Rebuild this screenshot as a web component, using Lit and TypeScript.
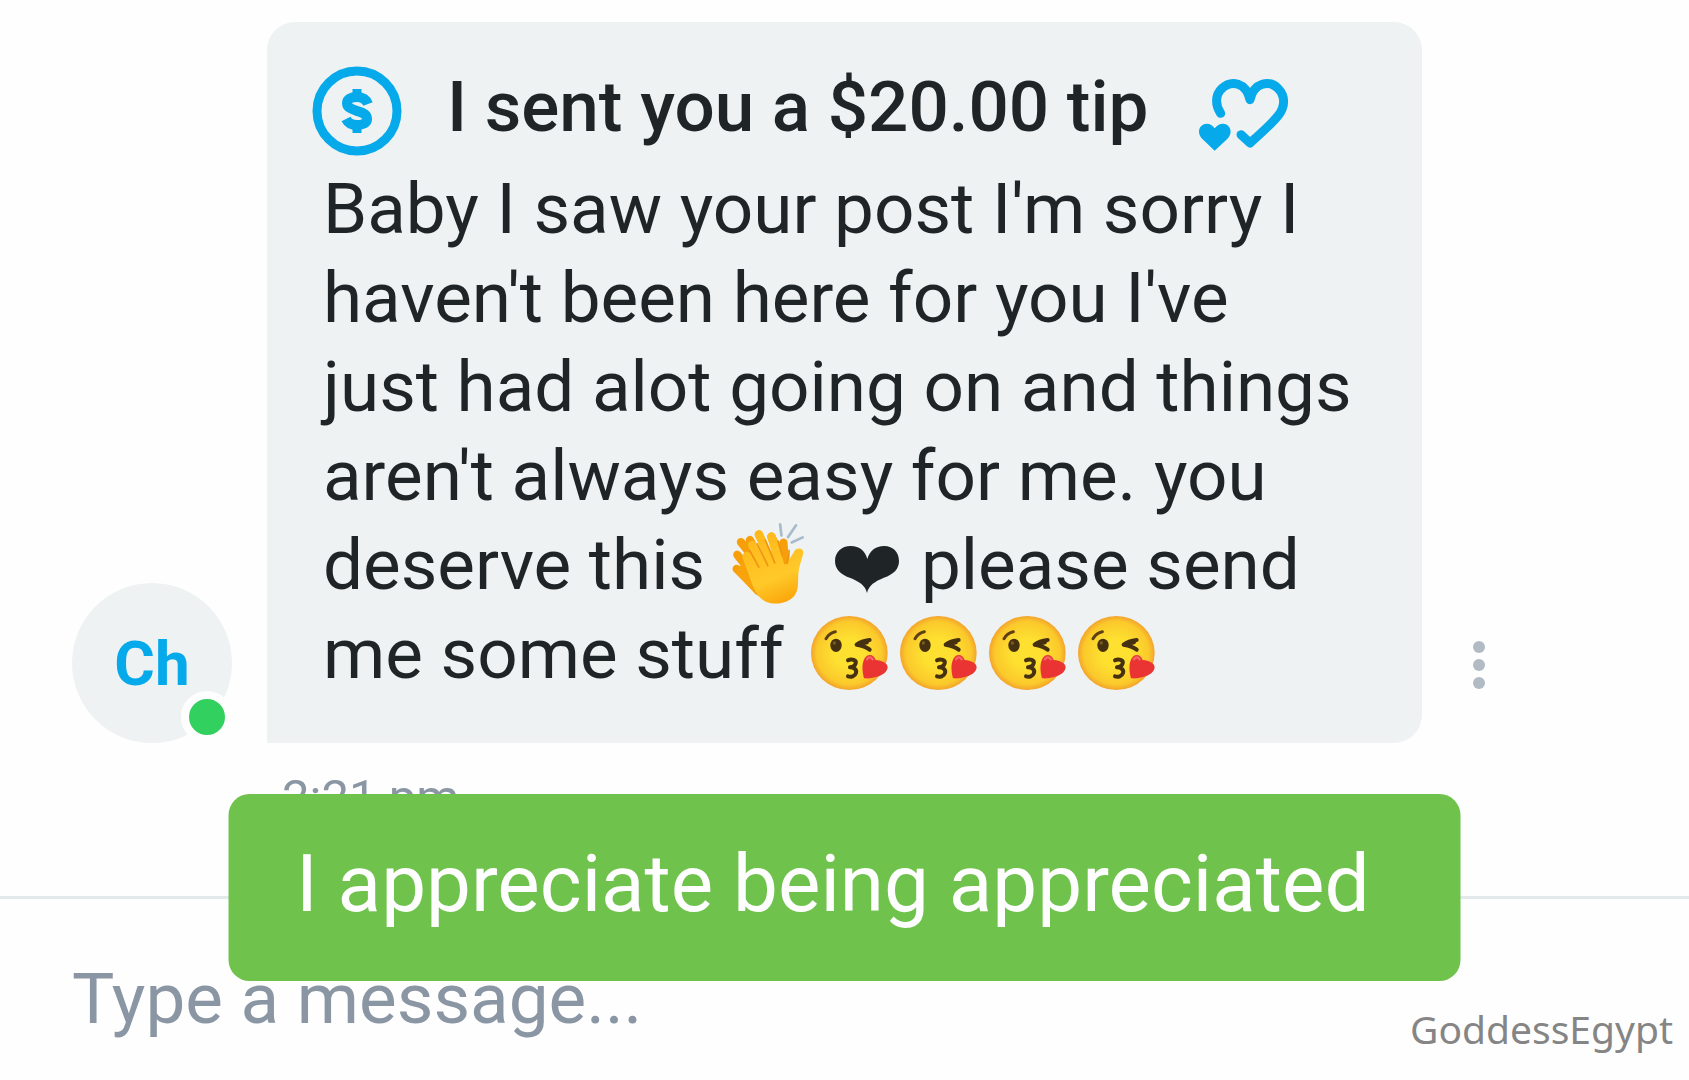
import { LitElement, html, css, svg } from "lit";
import { customElement } from "lit/decorators.js";

@customElement("emoji-kiss")
class EmojiKiss extends LitElement {
  static styles = css`
    :host { display: inline-block; width: 77px; height: 74px; margin: 0 2px 0 10px; vertical-align: -12px; line-height: 0; }
    .art { display: block; width: 100%; height: 100%; }
  `;
  render() {
    return html`<svg class="art" viewBox="60 50 231 222" preserveAspectRatio="none" role="img" aria-label="😘">
      <defs>
        <radialGradient id="face" cx="0.5" cy="0.5" r="0.5">
          <stop offset="0.4" stop-color="#fde030" />
          <stop offset="0.85" stop-color="#fbc92b" />
          <stop offset="1" stop-color="#f3a42b" />
        </radialGradient>
      </defs>
      <ellipse cx="175" cy="161" rx="115" ry="111" fill="url(#face)" />
      <path d="M105 118C112 106 121 99 133 97" fill="none" stroke="#5c3f12" stroke-width="9" stroke-linecap="round" />
      <ellipse cx="135" cy="138" rx="17" ry="20" fill="#45300f" />
      <ellipse cx="130" cy="131" rx="5" ry="5" fill="#7a5a25" />
      <path d="M236 122C221 124 206 129 197 136C211 138 226 143 236 151M213 133L228 129" fill="none" stroke="#45300f" stroke-width="12" stroke-linecap="round" stroke-linejoin="round" />
      <path d="M171 183C182 177 197 182 194 192C192 201 183 203 177 204C190 204 198 211 195 221C192 231 180 234 171 231" fill="none" stroke="#45300f" stroke-width="12" stroke-linecap="round" stroke-linejoin="round" />
      <path d="M219 237C214 218 211 194 221 177C229 162 248 163 254 182C263 182 278 186 286 194C293 202 290 213 280 222C264 234 239 239 219 237Z" fill="#ea3434" />
      <path d="M228 180C233 172 241 173 245 180" fill="none" stroke="#f2696a" stroke-width="7" stroke-linecap="round" />
    </svg>`;
  }
}

@customElement("emoji-clap")
class EmojiClap extends LitElement {
  static styles = css`
    :host { display: inline-block; width: 72px; height: 81px; margin: 0 9px 0 9px; vertical-align: -15px; line-height: 0; }
    .art { display: block; width: 100%; height: 100%; }
  `;
  render() {
    return html`<svg class="art" viewBox="66 44 217 242" preserveAspectRatio="none" role="img" aria-label="👏">
      <defs>
        <linearGradient id="palm" gradientUnits="userSpaceOnUse" x1="130" y1="80" x2="215" y2="285">
          <stop offset="0" stop-color="#ffb81a" />
          <stop offset="0.65" stop-color="#ffc929" />
          <stop offset="1" stop-color="#fba60a" />
        </linearGradient>
      </defs>
      <g stroke="#a9bacb" stroke-width="8" stroke-linecap="round">
        <path d="M211 48L215 81M259 51L235 86M279 87L246 102" />
      </g>
      <g fill="none" stroke="#f79f0b" stroke-width="25" stroke-linecap="round">
        <path d="M93 101L145 165M82 139L140 210M80 181L150 250M185 85L225 170M221 103L225 170M120 95L160 170" />
      </g>
      <path d="M75 190L138 258L170 200L110 150Z" fill="#f9a30c" />
      <g fill="none" stroke="url(#palm)" stroke-width="26" stroke-linecap="round">
        <path d="M147 78L186 165M127 110L165 180M111 143L150 205M185 85L212 175" />
      </g>
      <path d="M99 151C94 138 107 128 119 137L142 171L180 150L212 166C218 170 225 171 232 163L253 130C260 116 281 118 281 133C279 148 270 166 267 187C263 214 270 239 255 260C237 284 198 291 168 279C147 270 138 250 128 230Z" fill="url(#palm)" />
      <path d="M119 126L147 176M142 106L174 171M166 94L195 163M205 98L217 140" fill="none" stroke="#ee9510" stroke-width="5" stroke-linecap="round" />
      <path d="M232 165C236 153 239 140 238 126" fill="none" stroke="#ee9510" stroke-width="5" stroke-linecap="round" />
    </svg>`;
  }
}

@customElement("app-root")
class AppRoot extends LitElement {
  static styles = css`
    :host {
      display: block;
      font-family: Roboto, "Liberation Sans", sans-serif;
      color: #1f2426;
    }
    .page {
      position: relative;
      display: flex;
      flex-direction: column;
      box-sizing: border-box;
      min-height: 100vh;
      padding-top: 22px;
      background: #fefefe;
      overflow: hidden;
    }
    .message {
      display: flex;
      align-items: flex-end;
      padding: 0 188px 0 72px;
    }
    .avatar {
      position: relative;
      flex: none;
      display: grid;
      place-items: center;
      width: 160px;
      height: 160px;
      margin-right: 35px;
      border-radius: 50%;
      background: #eef2f3;
      color: #06a9ea;
      font-size: 62px;
      font-weight: 700;
    }
    .online {
      position: absolute;
      right: -1px;
      bottom: 0;
      width: 36px;
      height: 36px;
      border: 8px solid #fefefe;
      border-radius: 50%;
      background: #32d05e;
    }
    .bubble {
      flex: 1;
      min-width: 0;
      padding: 44px 62px 45px 45px;
      border-radius: 28px 28px 28px 0;
      background: #eef2f3;
    }
    .tip {
      display: flex;
      align-items: flex-start;
      height: 90px;
      margin-bottom: 8px;
    }
    .coin { flex: none; width: 90px; height: 90px; }
    .title {
      margin: 0 50px 0 45px;
      font-size: 71px;
      line-height: 82px;
      font-weight: 500;
      white-space: nowrap;
    }
    .hearts { flex: none; width: 90px; height: 73px; margin-top: 12px; }
    .text {
      margin: 0;
      padding-left: 11px;
      font-size: 71px;
      line-height: 89px;
    }
    .heart { width: 64px; height: 47px; vertical-align: -4px; margin: 0 4px 0 5px; }
    .menu {
      flex: none;
      width: 44px;
      height: 60px;
      margin: 0 0 48px 35px;
      padding: 0;
      border: 0;
      background: none;
    }
    .dots { display: block; width: 44px; height: 60px; }
    .time {
      margin: 28px 0 71px 282px;
      font-size: 49px;
      line-height: 54px;
      color: #8a96a3;
    }
    .composer {
      flex: 1;
      display: flex;
      align-items: flex-start;
      padding: 58px 72px 0;
      border-top: 3px solid #e3e8eb;
    }
    .input {
      flex: 1;
      min-width: 0;
      height: 84px;
      padding: 0;
      border: 0;
      outline: 0;
      background: none;
      color: #1f2426;
      font: 400 71px/84px Roboto, "Liberation Sans", sans-serif;
    }
    .input::placeholder { color: #8a96a3; opacity: 1; }
    .toast {
      position: absolute;
      left: 50%;
      bottom: 99px;
      transform: translateX(-50%);
      box-sizing: border-box;
      width: 73%;
      padding: 42px 68px 49px;
      border-radius: 21px;
      background: #6fc24c;
      color: #fefefe;
      font-size: 80px;
      line-height: 96px;
      white-space: nowrap;
    }
    .mark {
      position: absolute;
      right: 16px;
      bottom: 24px;
      color: #858585;
      font: 400 39px/54px "Noto Sans", "Open Sans", sans-serif;
    }
  `;

  render() {
    return html`
      <main class="page">
        <article class="message">
          <div class="avatar">Ch<span class="online"></span></div>
          <div class="bubble">
            <header class="tip">
              <svg class="coin" viewBox="0 0 90 90" aria-hidden="true" fill="none" stroke="#06a9ea">
                <circle cx="45" cy="45" r="40" stroke-width="9" />
                <path d="M45 23V33M45 57V67" stroke-width="9" />
                <path d="M56 38C54 33 50 31 45 31C39 31 35 33 35 37C35 42 40 43 45 45C51 47 55 48 55 53C55 57 51 59 45 59C39 59 36 57 34 53" stroke-width="10" />
              </svg>
              <h1 class="title">I sent you a $20.00 tip</h1>
              <svg class="hearts" viewBox="27 37 270 219" aria-hidden="true">
                <path d="M92 143C76 120 74 88 96 68C124 42 168 50 180 102C192 50 238 42 264 68C286 90 286 122 266 148C244 176 212 204 180 232L153 207" fill="none" stroke="#06a9ea" stroke-width="27" stroke-linecap="round" stroke-linejoin="round" />
                <path d="M74 255L38 221C24 207 24 191 34 181C46 169 65 173 74 188C84 173 104 169 115 181C125 191 124 207 111 221Z" fill="#06a9ea" />
              </svg>
            </header>
            <p class="text">
              Baby I saw your post I'm sorry I haven't been here for you I've just had alot going on and things aren't always easy for me. you deserve this <emoji-clap></emoji-clap>
              <svg class="heart" viewBox="374 110 190 142" preserveAspectRatio="none" role="img" aria-label="❤">
                <path d="M469 252C464 229 444 217 420 207C390 195 374 180 374 155C374 129 393 110 421 110C447 110 464 126 470 149C476 126 494 110 520 110C547 110 564 130 564 155C564 180 548 195 519 206C493 217 474 229 469 252Z" fill="#1f2426" />
              </svg>
              please send me some stuff <emoji-kiss></emoji-kiss><emoji-kiss></emoji-kiss><emoji-kiss></emoji-kiss><emoji-kiss></emoji-kiss>
            </p>
          </div>
          <button class="menu" type="button" aria-label="Message options">
            <svg class="dots" viewBox="0 0 44 60" aria-hidden="true" fill="#b2bbc3">
              ${[12, 30, 48].map((y) => svg`<circle cx="22" cy=${y} r="6" />`)}
            </svg>
          </button>
        </article>
        <time class="time">2:21 pm</time>
        <form class="composer">
          <input class="input" type="text" placeholder="Type a message..." aria-label="Type a message..." />
        </form>
        <div class="toast" role="status">I appreciate being appreciated</div>
        <div class="mark">GoddessEgypt</div>
      </main>
    `;
  }
}
